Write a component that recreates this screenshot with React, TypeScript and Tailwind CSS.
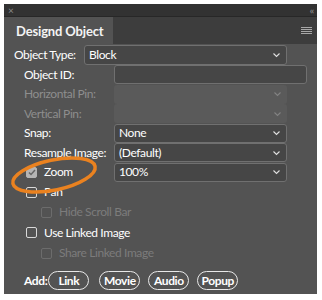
import React from 'react';

const font = { fontFamily: 'Lato, "Liberation Sans", sans-serif' };
const txt = 'text-[12px] tracking-[-0.4px]';

const Chevron = ({ dim }: { dim?: boolean }) => (
  <svg width="9" height="6" viewBox="0 0 9 6" className={dim ? 'opacity-30' : ''}>
    <path d="M1.5 1.5l3 3l3-3" fill="none" stroke="#e0e0e0" strokeWidth="1.1" />
  </svg>
);

const Select = ({ value, disabled, className = '' }: { value?: string; disabled?: boolean; className?: string }) => (
  <div
    className={`flex h-[19px] items-center justify-between rounded-[3px] pl-[4px] pr-[5px] ${txt} ${
      disabled ? 'bg-[#5a5a5a]' : 'border border-[#707070] bg-[#464646] text-white'
    } ${className}`}
  >
    <span>{value}</span>
    <Chevron dim={disabled} />
  </div>
);

const Row = ({ label, disabled, children }: { label: string; disabled?: boolean; children: React.ReactNode }) => (
  <div className="flex h-[19.5px] items-center">
    <div className={`w-[110px] shrink-0 whitespace-nowrap pl-[20px] ${txt} ${disabled ? 'text-[#8e8e8e]' : 'text-white'}`}>
      {label}
    </div>
    {children}
  </div>
);

const Check = ({ checked, disabled }: { checked?: boolean; disabled?: boolean }) => (
  <div
    className={`flex h-[11px] w-[11px] shrink-0 items-center justify-center rounded-[2px] border ${
      disabled ? 'border-[#6c6c6c]' : checked ? 'border-[#b5b5b5] bg-[#b5b5b5]' : 'border-[#d8d8d8]'
    }`}
  >
    {checked && (
      <svg width="8" height="7" viewBox="0 0 8 7">
        <path d="M1 3.5l2 2L7 1" fill="none" stroke="#666" strokeWidth="1.5" />
      </svg>
    )}
  </div>
);

const CheckRow = ({ label, indent, checked, disabled, h }: { label: string; indent?: boolean; checked?: boolean; disabled?: boolean; h: string }) => (
  <div className={`flex items-center gap-[7px] ${h} ${indent ? 'pl-[37px]' : 'pl-[22px]'}`}>
    <Check checked={checked} disabled={disabled} />
    <span className={`whitespace-nowrap ${txt} ${disabled ? 'text-[#7c7c7c]' : 'text-white'}`}>{label}</span>
  </div>
);

const Pill = ({ children, className = '' }: { children: React.ReactNode; className?: string }) => (
  <div
    className={`flex h-[19px] w-[41px] items-center justify-center rounded-full border-[1.5px] border-[#e8e8e8] font-bold text-white ${txt} ${className}`}
  >
    {children}
  </div>
);

export default function App() {
  return (
    <div className="h-[300px] w-[322px] bg-white p-[4px]" style={font}>
      <div className="relative flex h-[290px] w-[313px] flex-col bg-[#535353]">
        <div className="flex h-[13px] items-center justify-between border-b border-[#272727] bg-[#323232] px-[4px]">
          <span className="text-[10px] leading-none text-[#8a8a8a]">×</span>
          <span className="text-[9px] font-bold leading-none tracking-[-1px] text-[#8a8a8a]">‹‹</span>
        </div>
        <div className="flex h-[27px] items-stretch bg-[#3d3d3d]">
          <div className="flex w-[109px] items-center bg-[#535353] pl-[12px] pt-[2px] text-[13px] font-bold tracking-[-0.15px] text-[#f4f4f4]">
            Designd Object
          </div>
          <div className="flex flex-1 items-center justify-end pr-[5px]">
            <div className="flex w-[11px] flex-col gap-[1px]">
              {[0, 1, 2, 3].map((i) => (
                <div key={i} className="h-[1px] bg-[#a8a8a8]" />
              ))}
            </div>
          </div>
        </div>

        <div className="flex h-[21px] items-center pl-[10px]">
          <div className={`w-[70px] shrink-0 whitespace-nowrap text-white ${txt}`}>Object Type:</div>
          <Select value="Block" className="h-[20px] w-[203px]" />
        </div>
        <Row label="Object ID:">
          <div className="h-[19px] w-[193px] rounded-[3px] border border-[#707070] bg-[#464646]" />
        </Row>
        <Row label="Horizontal Pin:" disabled>
          <Select disabled className="w-[173px]" />
        </Row>
        <Row label="Vertical Pin:" disabled>
          <Select disabled className="w-[173px]" />
        </Row>
        <Row label="Snap:">
          <Select value="None" className="w-[173px]" />
        </Row>
        <Row label="Resample Image:">
          <Select value="(Default)" className="w-[173px]" />
        </Row>
        <div className="flex h-[19.5px] items-center">
          <div className="w-[110px] shrink-0">
            <CheckRow label="Zoom" checked h="h-[19.5px]" />
          </div>
          <Select value="100%" className="w-[173px]" />
        </div>
        <CheckRow label="Pan" h="h-[20px]" />
        <CheckRow label="Hide Scroll Bar" indent disabled h="h-[20px]" />
        <CheckRow label="Use Linked Image" h="h-[21px]" />
        <CheckRow label="Share Linked Image" indent disabled h="h-[20px]" />
        <div className="mt-[8px] flex items-center gap-[8px] pl-[20px]">
          <span className={`-mr-[7px] font-bold text-white ${txt}`}>Add:</span>
          <Pill>Link</Pill>
          <Pill className="ml-[2px]">Movie</Pill>
          <Pill>Audio</Pill>
          <Pill>Popup</Pill>
        </div>

        {/* annotation circle around the Zoom checkbox */}
        <svg className="pointer-events-none absolute left-0 top-[150px]" width="100" height="42" viewBox="0 0 100 42">
          <ellipse cx="50" cy="21" rx="42" ry="15" transform="rotate(-12 50 21)" fill="none" stroke="#ea8220" strokeWidth="3.5" />
        </svg>
      </div>
    </div>
  );
}
